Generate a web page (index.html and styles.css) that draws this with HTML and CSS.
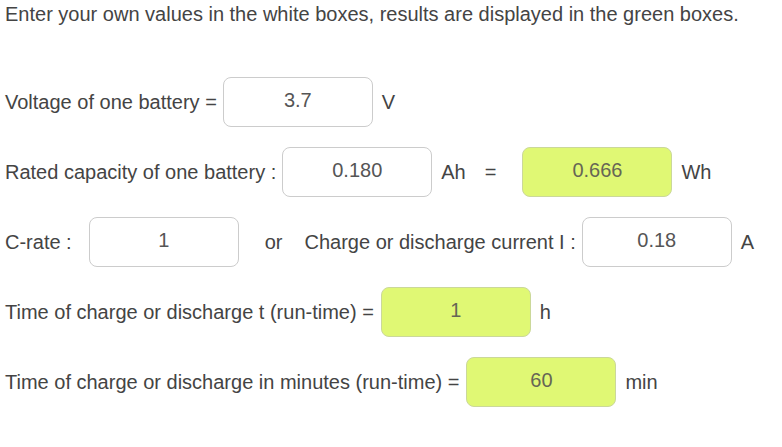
FILE: index.html
```html
<!DOCTYPE html>
<html lang="en">
<head>
<meta charset="utf-8">
<title>Battery run-time calculator</title>
<link rel="stylesheet" href="styles.css">
</head>
<body>
<div class="calc">
  <p class="intro">Enter your own values in the white boxes, results are displayed in the green boxes.</p>
  <div class="rows">
    <div class="row">
      <span class="label">Voltage of one battery =</span>
      <input class="box" type="text" value="3.7">
      <span class="unit">V</span>
    </div>
    <div class="row">
      <span class="label">Rated capacity of one battery :</span>
      <input class="box" type="text" value="0.180">
      <span class="unit">Ah</span>
      <span class="eq">=</span>
      <input class="box result" type="text" value="0.666" readonly>
      <span class="unit">Wh</span>
    </div>
    <div class="row">
      <span class="label">C-rate :</span>
      <input class="box crate" type="text" value="1">
      <span class="or">or</span>
      <span class="label">Charge or discharge current I :</span>
      <input class="box" type="text" value="0.18">
      <span class="unit">A</span>
    </div>
    <div class="row">
      <span class="label">Time of charge or discharge t (run-time) =</span>
      <input class="box result" type="text" value="1" readonly>
      <span class="unit">h</span>
    </div>
    <div class="row">
      <span class="label">Time of charge or discharge in minutes (run-time) =</span>
      <input class="box result" type="text" value="60" readonly>
      <span class="unit">min</span>
    </div>
  </div>
</div>
</body>
</html>
```

FILE: styles.css
```css
html, body {
  margin: 0;
  padding: 0;
  background: #ffffff;
}

body {
  font-family: "Liberation Sans", Arial, sans-serif;
  font-size: 20px;
  color: #444444;
}

.calc {
  padding: 3px 5px;
}

.intro {
  margin: 0;
  line-height: 23px;
}

.rows {
  display: flex;
  flex-direction: column;
  gap: 20px;
  margin-top: 51px;
}

.row {
  display: flex;
  align-items: center;
  gap: 6px;
  height: 50px;
}

.box {
  box-sizing: border-box;
  width: 150px;
  height: 50px;
  border: 1px solid #cccccc;
  border-radius: 8px;
  background: #ffffff;
  font-family: "Liberation Sans", Arial, sans-serif;
  font-size: 20px;
  color: #555555;
  text-align: center;
  padding: 0 4px 4px;
  margin: 0;
  outline: none;
}

.box.result {
  background: #e0f874;
  border-color: #cbd89a;
  color: #666655;
}

.box.crate {
  margin-left: 11px;
}

.unit {
  margin-left: 3px;
}

.eq {
  margin-left: 13px;
  margin-right: 20px;
}

.or {
  margin-left: 20px;
  margin-right: 16px;
}

.label + .box.result {
  margin-left: 1px;
}
```
